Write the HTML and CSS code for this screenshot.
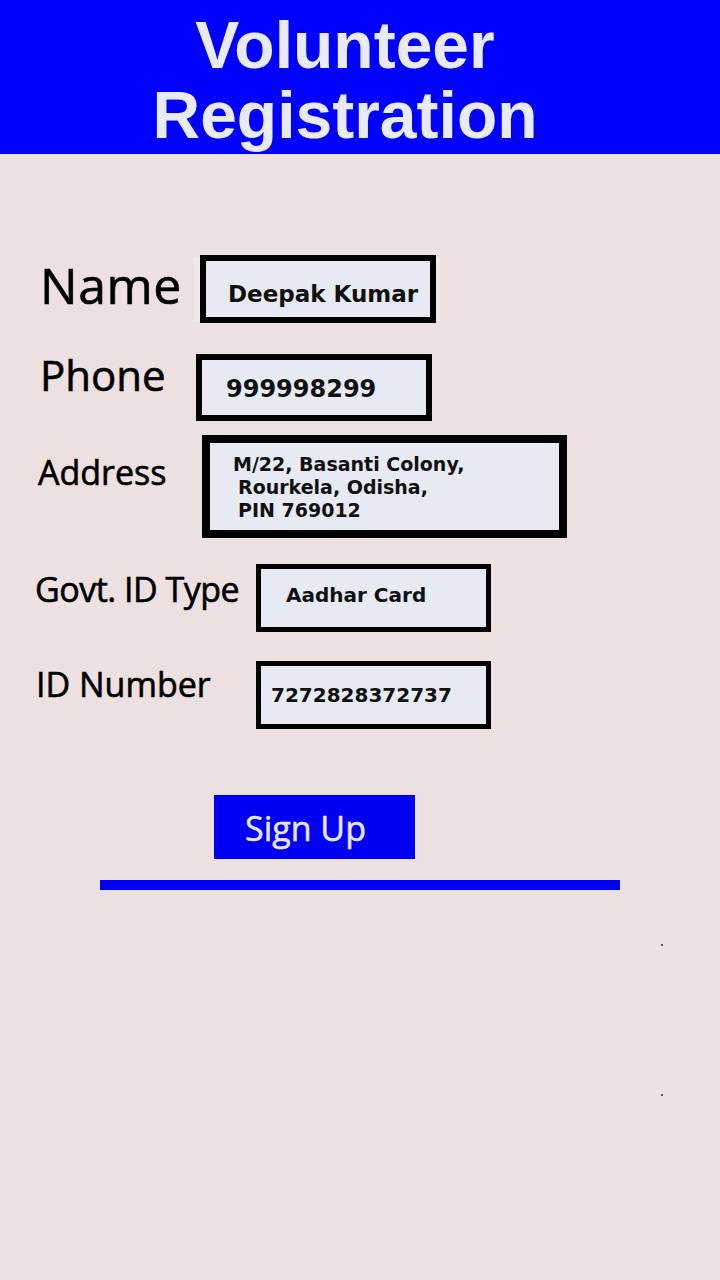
FILE: index.html
```html
<!DOCTYPE html>
<html lang="en">
<head>
<meta charset="utf-8">
<title>Volunteer Registration</title>
<link rel="stylesheet" href="styles.css">
</head>
<body>
<div class="page">
  <header class="header">
    <h1 class="title">Volunteer<br>Registration</h1>
  </header>
  <main class="form">
    <div class="row row-name">
      <div class="label label-name">Name</div>
      <div class="box box-name">Deepak Kumar</div>
    </div>
    <div class="row row-phone">
      <div class="label label-phone">Phone</div>
      <div class="box box-phone">999998299</div>
    </div>
    <div class="row row-address">
      <div class="label label-address">Address</div>
      <div class="box box-address">
        <div class="addr-line">M/22, Basanti Colony,</div>
        <div class="addr-line indent">Rourkela, Odisha,</div>
        <div class="addr-line indent">PIN 769012</div>
      </div>
    </div>
    <div class="row row-govt">
      <div class="label label-govt">Govt. ID Type</div>
      <div class="box box-govt">Aadhar Card</div>
    </div>
    <div class="row row-idnum">
      <div class="label label-idnum">ID Number</div>
      <div class="box box-idnum">7272828372737</div>
    </div>
    <button class="signup" type="button">Sign Up</button>
    <div class="rule"></div>
  </main>
  <span class="dot dot-a"></span>
  <span class="dot dot-b"></span>
</div>
</body>
</html>
```
FILE: styles.css
```css
* { box-sizing: border-box; }
html, body { margin: 0; padding: 0; }
body {
  background: #ece0e0;
  width: 720px;
  height: 1280px;
  overflow: hidden;
}
.page {
  position: relative;
  width: 720px;
  height: 1280px;
}
.header {
  background: #0000fd;
  height: 154px;
  padding-top: 10px;
}
.title {
  margin: 0;
  text-align: center;
  font-family: "Liberation Sans", Arial, sans-serif;
  font-weight: 700;
  font-size: 66px;
  line-height: 70px;
  color: #e8eaf6;
  padding-right: 30px;
}
.form {
  padding-top: 101px;
  display: flex;
  flex-direction: column;
}
.row {
  display: flex;
  align-items: flex-start;
}
.label {
  font-family: "Open Sans", "Noto Sans", sans-serif;
  font-weight: 400;
  -webkit-text-stroke: 0.6px #000;
  color: #000;
  line-height: 1;
  flex: none;
}
.box {
  background: #e7e9f3;
  border: 5px solid #000;
  font-family: "DejaVu Sans", sans-serif;
  font-weight: 700;
  color: #111;
  flex: none;
  white-space: nowrap;
}

.row-name { padding-left: 40px; }
.label-name { width: 160px; font-size: 50px; margin-top: 5px; letter-spacing: 0.5px; }
.box-name {
  width: 236px; height: 68px; border-width: 6px;
  font-size: 23px; line-height: 23px;
  padding: 22px 0 0 22px;
  box-shadow: -8px 0 0 -2px #efe8ec, 6px 0 0 -2px #efe8ec;
}

.row-phone { padding-left: 40px; margin-top: 31px; }
.label-phone { width: 156px; font-size: 42px; margin-top: 0; }
.box-phone {
  width: 236px; height: 67px; border-width: 6px;
  font-size: 24px; line-height: 24px;
  padding: 17px 0 0 24px;
}

.row-address { padding-left: 38px; margin-top: 14px; }
.label-address { width: 164px; font-size: 34px; margin-top: 20px; }
.box-address {
  width: 365px; height: 103px; border-width: 8px;
  font-size: 19px; line-height: 23px;
  padding: 10px 0 0 23px;
}
.indent { padding-left: 5px; }

.row-govt { padding-left: 35px; margin-top: 26px; }
.label-govt { width: 221px; font-size: 34px; margin-top: 8px; letter-spacing: -0.5px; }
.box-govt {
  width: 235px; height: 68px;
  font-size: 20px; line-height: 20px;
  padding: 16px 0 0 25px;
}

.row-idnum { padding-left: 36px; margin-top: 29px; }
.label-idnum { width: 220px; font-size: 34px; margin-top: 6px; }
.box-idnum {
  width: 235px; height: 68px;
  font-size: 20px; line-height: 20px;
  padding: 19px 0 0 10px;
}

.signup {
  align-self: flex-start;
  margin: 66px 0 0 214px;
  width: 201px;
  height: 64px;
  background: #0000f5;
  border: 0;
  border-radius: 0;
  color: #ebe6f5;
  font-family: "Open Sans", "Noto Sans", sans-serif;
  font-weight: 400;
  -webkit-text-stroke: 0.5px #ebe6f5;
  font-size: 34px;
  line-height: 34px;
  text-align: left;
  padding: 2px 0 0 31px;
  display: block;
}
.rule {
  margin: 21px 0 0 100px;
  width: 520px;
  height: 10px;
  background: #0000f5;
}
.dot {
  position: absolute;
  width: 2px;
  height: 2px;
  background: #4d6a6a;
}
.dot-a { left: 661px; top: 944px; }
.dot-b { left: 661px; top: 1094px; }
```
